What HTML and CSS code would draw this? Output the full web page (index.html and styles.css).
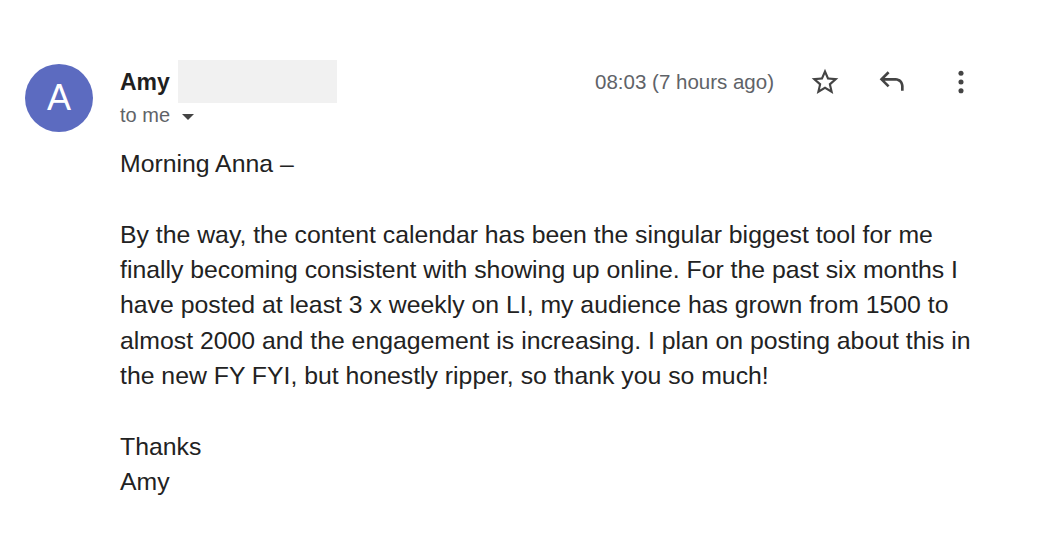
FILE: index.html
```html
<!DOCTYPE html>
<html>
<head>
<meta charset="utf-8">
<link rel="stylesheet" href="styles.css">
</head>
<body>
<div class="mail">
  <div class="avatar">A</div>
  <div class="main">
    <div class="head">
      <div class="from">
        <div class="name-row"><span class="name">Amy</span><span class="redact"></span></div>
        <div class="to">to me <svg class="caret" width="12" height="6" viewBox="0 0 12 6"><path d="M0 0h12L6 6z" fill="#444"/></svg></div>
      </div>
      <div class="meta">
        <span class="time">08:03 (7 hours ago)</span>
        <svg class="icon star" width="32" height="32" viewBox="0 0 24 24"><path d="M22 9.24l-7.19-.62L12 2 9.19 8.63 2 9.24l5.46 4.73L5.82 21 12 17.27 18.18 21l-1.63-7.03L22 9.24zM12 15.4l-3.76 2.27 1-4.28-3.32-2.88 4.38-.38L12 6.1l1.71 4.04 4.38.38-3.32 2.88 1 4.28L12 15.4z" fill="#444"/></svg>
        <svg class="icon reply" width="32" height="32" viewBox="0 0 24 24"><path d="M20 18.5v-3.5c0-3.3-2.7-6-6-6H5.8l3.6-3.6L8 4 2 10l6 6 1.4-1.4L5.8 11H14c2.2 0 4 1.8 4 4v3.5z" fill="#444"/></svg>
        <svg class="icon more" width="32" height="32" viewBox="0 0 24 24"><circle cx="12" cy="5.5" r="1.9" fill="#444"/><circle cx="12" cy="12" r="1.9" fill="#444"/><circle cx="12" cy="18.5" r="1.9" fill="#444"/></svg>
      </div>
    </div>
    <div class="body">
      <p>Morning Anna –</p>
      <p>By the way, the content calendar has been the singular biggest tool for me finally becoming consistent with showing up online. For the past six months I have posted at least 3 x weekly on LI, my audience has grown from 1500 to almost 2000 and the engagement is increasing. I plan on posting about this in the new FY FYI, but honestly ripper, so thank you so much!</p>
      <p>Thanks<br>Amy</p>
    </div>
  </div>
</div>
</body>
</html>
```
FILE: styles.css
```css
html, body { margin: 0; padding: 0; background: #fff; }
body { font-family: "Liberation Sans", Arial, sans-serif; color: #222; width: 1042px; height: 554px; overflow: hidden; }
.mail { display: flex; padding: 64px 0 0 25px; }
.avatar { width: 68px; height: 68px; border-radius: 50%; background: #5c6bc0; color: #fff; font-size: 36px; display: flex; align-items: center; justify-content: center; flex: none; }
.main { margin-left: 27px; width: 870px; }
.head { display: flex; justify-content: space-between; }
.from { margin-top: -4px; }
.name-row { display: flex; align-items: center; height: 43px; }
.name { font-weight: bold; font-size: 23px; color: #1f1f1f; margin-top: 2px; }
.redact { display: inline-block; width: 159px; height: 43px; background: #f1f1f1; margin-left: 8px; }
.to { font-size: 20px; color: #5f6368; margin-top: 1px; display: flex; align-items: center; gap: 12px; }
.caret { margin-top: 2px; }
.meta { display: flex; align-items: center; height: 36px; margin-top: 0px; margin-right: 13px; }
.time { font-size: 20.5px; color: #5f6368; margin-right: 35px; }
.icon { display: block; }
.star { margin-right: 36px; }
.reply { margin-right: 36px; }
.body { margin-top: 19px; font-size: 24.8px; line-height: 35.3px; width: 870px; }
.body p { margin: 0 0 35.5px 0; }
```
